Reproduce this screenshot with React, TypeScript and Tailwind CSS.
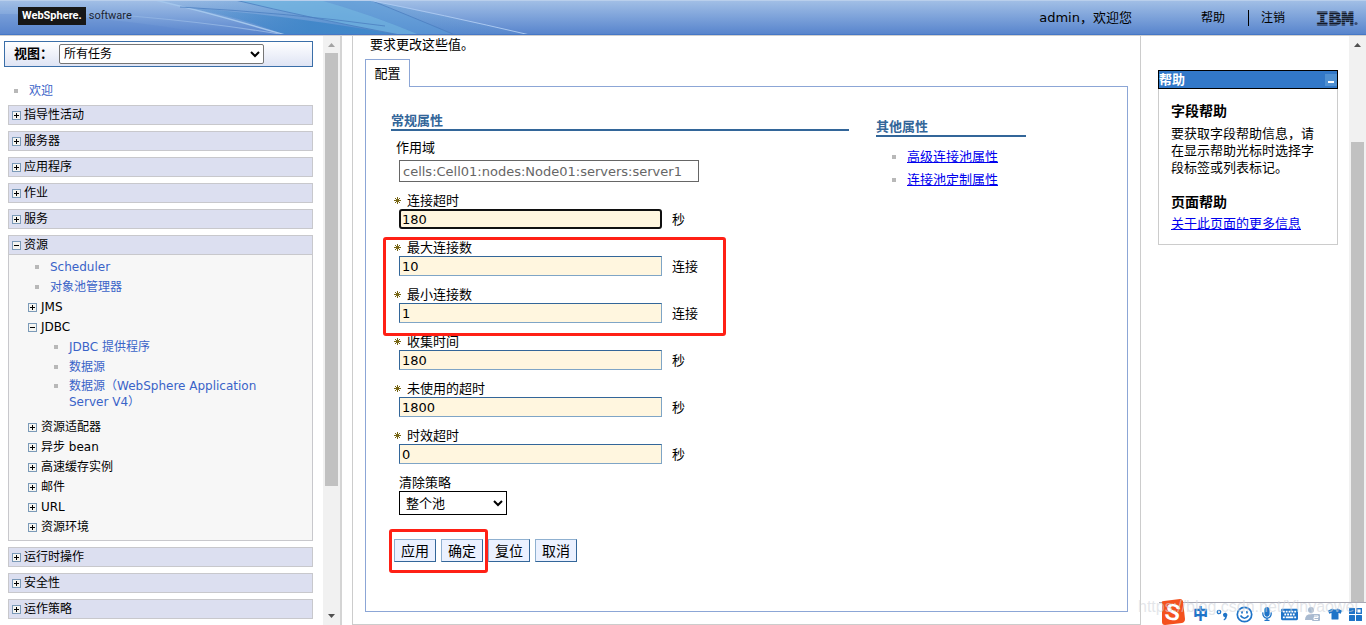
import { FaKeyboard, FaMicrophone, FaTshirt } from "react-icons/fa";

const requiredFields = [
  { id: "connTimeout", label: "连接超时", value: "180", unit: "秒", active: true },
  { id: "maxConn", label: "最大连接数", value: "10", unit: "连接" },
  { id: "minConn", label: "最小连接数", value: "1", unit: "连接" },
  { id: "reapTime", label: "收集时间", value: "180", unit: "秒" },
  { id: "unusedTimeout", label: "未使用的超时", value: "1800", unit: "秒" },
  { id: "agedTimeout", label: "时效超时", value: "0", unit: "秒" },
];

const ToggleIcon = ({ open = false }: { open?: boolean }) => (
  <svg width="9" height="9" viewBox="0 0 9 9" className="shrink-0" shapeRendering="crispEdges">
    <rect x="0.5" y="0.5" width="8" height="8" fill="#f4f4f0" stroke="#7b9ab8" />
    <path d="M2 4.5H7" stroke="#000" />
    {!open && <path d="M4.5 2V7" stroke="#000" />}
  </svg>
);

const Bullet = () => <span className="size-1 shrink-0 bg-[#b8b8b8]" />;

const Required = () => (
  <svg width="7" height="7" viewBox="0 0 7 7" className="shrink-0">
    <path d="M3.5 0V7M0 3.5H7M1 1L6 6M6 1L1 6" stroke="#766514" strokeWidth="1" />
  </svg>
);

const Section = ({ title, open = false }: { title: string; open?: boolean }) => (
  <button
    type="button"
    className="flex h-5 w-full items-center gap-[3px] border border-[#c8c8cc] bg-[#dcdff0] pl-[3px] text-left"
  >
    <ToggleIcon open={open} />
    {title}
  </button>
);

const Node = ({ title, open = false }: { title: string; open?: boolean }) => (
  <li>
    <button type="button" className="flex h-5 items-center gap-1 pl-[19px]">
      <ToggleIcon open={open} />
      {title}
    </button>
  </li>
);

const Leaf = ({ title, deep = false }: { title: string; deep?: boolean }) => (
  <li className={deep ? "flex h-5 items-center gap-[11px] pl-[45px]" : "flex h-5 items-center gap-[11px] pl-[26px]"}>
    <Bullet />
    <a href="#" className="text-[#3a63c8]">{title}</a>
  </li>
);

const Scrollbar = ({ side }: { side: "left" | "right" }) => (
  <div className="flex w-[17px] shrink-0 flex-col items-center bg-[#f1f1f1]">
    <svg width="17" height="17" viewBox="0 0 17 17" className="shrink-0">
      <path d="M5 11L8.5 7L12 11Z" fill={side === "left" ? "#a3a3a3" : "#505050"} />
    </svg>
    <div className="flex w-full flex-1 flex-col items-center">
      {side === "right" && <div className="h-[16%]" />}
      <div className={side === "left" ? "h-[78%] w-[13px] bg-[#c1c1c1]" : "w-[13px] flex-1 bg-[#c1c1c1]"} />
    </div>
    <svg width="17" height="17" viewBox="0 0 17 17" className="shrink-0">
      <path d="M5 6L8.5 10L12 6Z" fill="#505050" />
    </svg>
  </div>
);

const Header = () => (
  <header className="relative flex h-9 shrink-0 items-center overflow-hidden border-b border-[#cfcfcf] bg-linear-to-b from-[#a3c0e6] to-[#5683cc] px-2">
    <svg className="absolute top-0 left-0" width="540" height="35" viewBox="0 0 540 35">
      <defs>
        <linearGradient id="fade" x1="0" x2="1">
          <stop offset="0" stopColor="#3f86c8" stopOpacity="0.1" />
          <stop offset="0.6" stopColor="#3f86c8" stopOpacity="0.9" />
          <stop offset="1" stopColor="#4088cb" stopOpacity="0.9" />
        </linearGradient>
        <linearGradient id="sweep" x1="0" x2="1">
          <stop offset="0" stopColor="#4f93cf" stopOpacity="0.1" />
          <stop offset="0.5" stopColor="#4f93cf" stopOpacity="0.5" />
          <stop offset="1" stopColor="#4f93cf" stopOpacity="0.1" />
        </linearGradient>
      </defs>
      <path d="M155 0H368L530 35H285Z" fill="url(#sweep)" />
      <path d="M180 7Q280 14 400 35H285Q240 16 180 7Z" fill="url(#fade)" />
      <path d="M235 0H320Q370 14 420 35H400Q310 18 235 0Z" fill="#6fb4e0" opacity="0.7" />
      <path d="M320 0H368Q410 16 455 35H420Q370 14 320 0Z" fill="#5b9bd8" opacity="0.5" />
      <path d="M0 14Q100 14 215 35H0Z" fill="#5b84cc" opacity="0.3" />
      <path d="M155 0Q215 14 285 35" fill="none" stroke="#a4c6ec" strokeWidth="1.4" />
      <path d="M0 9Q150 13 280 34" fill="none" stroke="#8fb2e2" strokeWidth="1.2" />
      <path d="M235 0Q310 18 400 35M370 0Q410 16 455 35M180 7Q290 13 385 26" fill="none" stroke="#4b7fc0" strokeWidth="0.8" />
      <path d="M368 0Q440 14 530 35" fill="none" stroke="#a9c8f0" />
    </svg>
    <div className="absolute inset-x-0 top-0 h-px bg-[#b9cfec]" />
    <div className="absolute inset-x-0 bottom-0 h-px bg-[#4577c6]" />
    <div className="relative mb-1 ml-[10px] flex items-center gap-[3px] font-[Roboto,'Liberation_Sans',sans-serif] text-[11px] leading-[18px]">
      <span className="bg-[#171717] px-1 font-bold text-white">WebSphere.</span>
      <span className="text-[#1c2533]">software</span>
    </div>
    <div className="relative ml-auto flex items-center text-xs leading-4">
      <span className="mr-[69px] text-[13px]">admin，欢迎您</span>
      <a href="#">帮助</a>
      <span className="mr-3 ml-[23px] h-4 w-px bg-black" />
      <a href="#">注销</a>
      <svg className="ml-[30px]" width="43" height="26" viewBox="0 0 43 26" role="img" aria-label="IBM">
        <defs>
          <pattern id="stripes" width="4" height="2" patternUnits="userSpaceOnUse">
            <rect width="4" height="1.4" fill="#141a28" />
          </pattern>
        </defs>
        <text x="1" y="20" fontFamily="Liberation Mono" fontWeight="700" fontSize="21" fill="url(#stripes)" stroke="url(#stripes)">IBM</text>
        <circle cx="41" cy="18.5" r="1.6" fill="#3a4d73" />
      </svg>
    </div>
  </header>
);

const Sidebar = () => (
  <aside className="flex w-[342px] shrink-0 overflow-hidden border-r-2 border-[#d4d4d4]">
    <nav className="flex-1 pt-[5px] pr-[10px] pl-1 text-xs leading-4">
      <div className="flex h-[26px] items-center border border-[#3a6ea8] bg-linear-to-b from-white to-[#dfe4f4] pl-[9px]">
        <label htmlFor="view" className="w-[45px] text-[13px] font-bold">视图：</label>
        <select id="view" className="h-5 w-[205px] rounded-[2px] border border-[#767676] bg-white">
          <option>所有任务</option>
        </select>
      </div>
      <div className="mt-[14px] flex h-5 items-center gap-[11px] pl-[10px]">
        <Bullet />
        <a href="#" className="text-[#3a63c8]">欢迎</a>
      </div>
      <div className="mt-1 ml-1 flex flex-col gap-[6px]">
        <Section title="指导性活动" />
        <Section title="服务器" />
        <Section title="应用程序" />
        <Section title="作业" />
        <Section title="服务" />
        <div>
          <Section title="资源" open />
          <ul className="border border-t-0 border-[#c8c8cc] bg-[#f7f7f7] pt-[2px] pb-[3px]">
            <Leaf title="Scheduler" />
            <Leaf title="对象池管理器" />
            <Node title="JMS" />
            <Node title="JDBC" open />
            <Leaf title="JDBC 提供程序" deep />
            <Leaf title="数据源" deep />
            <li className="flex gap-[11px] pt-px pb-[7px] pl-[45px]">
              <span className="flex h-4 items-center"><Bullet /></span>
              <a href="#" className="w-[200px] text-[#3a63c8]">数据源（WebSphere Application Server V4）</a>
            </li>
            <Node title="资源适配器" />
            <Node title="异步 bean" />
            <Node title="高速缓存实例" />
            <Node title="邮件" />
            <Node title="URL" />
            <Node title="资源环境" />
          </ul>
        </div>
        <Section title="运行时操作" />
        <Section title="安全性" />
        <Section title="运作策略" />
      </div>
    </nav>
    <Scrollbar side="left" />
  </aside>
);

const GeneralForm = () => (
  <form className="relative w-[458px]">
    <h2 className="h-[19px] border-b-2 border-[#336699] text-[13px] leading-[18px] font-bold text-[#336699]">常规属性</h2>
    <div className="mt-2 pl-[5px]">
      <label htmlFor="scope" className="block">作用域</label>
      <input
        id="scope"
        readOnly
        defaultValue="cells:Cell01:nodes:Node01:servers:server1"
        className="mt-1 ml-[3px] block h-[22px] w-[300px] border border-[#666] px-[3px] text-[#666]"
      />
    </div>
    <div className="mt-[10px] flex flex-col gap-[10px] pl-[3px]">
      {requiredFields.map((f) => (
        <div key={f.id}>
          <label htmlFor={f.id} className="flex items-center gap-[6px]">
            <Required />
            {f.label}
          </label>
          <div className="flex items-center gap-[10px] pl-[5px]">
            <input
              id={f.id}
              defaultValue={f.value}
              className={
                f.active
                  ? "h-5 w-[263px] rounded-[3px] border-2 border-[#101010] bg-[#fff6df] px-px"
                  : "h-5 w-[263px] border border-[#7fa5c6] border-t-[#336699] border-l-[#336699] bg-[#fff6df] px-[2px]"
              }
            />
            <span>{f.unit}</span>
          </div>
        </div>
      ))}
    </div>
    <div className="mt-[10px] pl-2">
      <label htmlFor="purge" className="block">清除策略</label>
      <select id="purge" className="block h-6 w-[108px] border border-black bg-white px-[2px]">
        <option>整个池</option>
      </select>
    </div>
    <div className="mt-6 flex gap-[5px] pl-[3px] text-sm">
      {["应用", "确定", "复位", "取消"].map((name) => (
        <button
          key={name}
          type="button"
          className="h-[23px] w-[42px] border border-[#336699] border-t-[#8fb0d0] border-l-[#8fb0d0] bg-[#ebf1ff] leading-5"
        >
          {name}
        </button>
      ))}
    </div>
    {/* Highlight marks over the form */}
    <div className="pointer-events-none absolute top-[125px] -left-2 h-[99px] w-[343px] rounded-[3px] border-3 border-[#ff2015]" />
    <div className="pointer-events-none absolute top-[417px] -left-[2px] h-11 w-[99px] rounded-[3px] border-3 border-[#ff2015]" />
  </form>
);

const Content = () => (
  <main className="ml-[10px] flex flex-1 flex-col border border-t-0 border-[#cccccc] px-3 text-[13px] leading-[17px]">
    <p className="pl-[5px]">要求更改这些值。</p>
    <div className="relative mt-[6px] -mb-px flex h-7 w-[45px] items-center justify-center border border-b-0 border-[#8ca6d6] bg-white">
      配置
    </div>
    <div className="mb-3 flex flex-1 gap-[27px] border border-[#8ca6d6] pt-[25px] pl-[25px]">
      <GeneralForm />
      <section className="pt-[6px]">
        <h2 className="h-[19px] w-[150px] border-b-2 border-[#336699] text-[13px] leading-[18px] font-bold text-[#336699]">其他属性</h2>
        <ul className="mt-[11px] flex flex-col gap-[6px] pl-4">
          <li className="flex items-center gap-[11px]">
            <Bullet />
            <a href="#" className="text-[#0000ee] underline">高级连接池属性</a>
          </li>
          <li className="flex items-center gap-[11px]">
            <Bullet />
            <a href="#" className="text-[#0000ee] underline">连接池定制属性</a>
          </li>
        </ul>
      </section>
    </div>
  </main>
);

const HelpPortlet = () => (
  <aside className="flex w-[225px] shrink-0">
    <div className="flex-1 pt-[34px] pr-[11px] pl-[17px] text-[13px] leading-[17px]">
      <div className="flex h-[19px] items-center justify-between border border-black bg-[#3278c8] font-bold text-white">
        <h2>帮助</h2>
        <button type="button" aria-label="最小化" className="flex h-3 w-3 items-end justify-center bg-[#4f90d2] pb-[3px]">
          <span className="h-[2px] w-[6px] bg-white" />
        </button>
      </div>
      <div className="border border-t-0 border-[#cccccc] px-3 pt-3 pb-3">
        <h3 className="text-sm leading-5 font-bold">字段帮助</h3>
        <p className="mt-1">要获取字段帮助信息，请在显示帮助光标时选择字段标签或列表标记。</p>
        <h3 className="mt-4 text-sm leading-5 font-bold">页面帮助</h3>
        <a href="#" className="mt-[3px] block text-[#0000ee] underline">关于此页面的更多信息</a>
      </div>
    </div>
    <Scrollbar side="right" />
  </aside>
);

const InputBar = () => (
  <div className="absolute right-0 bottom-0 flex h-[23px] items-center gap-[7px] border-t border-[#a9a9b4] bg-white pr-1 text-[#1f74c8]">
    <svg width="27" height="27" viewBox="0 0 27 27" className="-mt-[5px]">
      <path d="M3 5Q2 3 5 3L21 1Q23 1 24 3L26 21Q26 24 23 25L6 27Q3 27 3 24Z" fill="#f4511e" />
      <text x="14" y="22" textAnchor="middle" fontFamily="Liberation Sans" fontWeight="700" fontSize="23" fill="#fff" transform="rotate(12 13.5 14)">S</text>
    </svg>
    <span className="text-[15px] leading-5 font-black">中</span>
    <svg width="14" height="16" viewBox="0 0 14 16">
      <circle cx="4" cy="6" r="1.7" fill="none" stroke="currentColor" strokeWidth="1.3" />
      <path d="M8 9a2.2 2.2 0 1 1 4.2 0.8Q12 13 9 14.5L8.5 13.5Q10 12.5 10 11.2A2.2 2.2 0 0 1 8 9Z" fill="currentColor" />
    </svg>
    <svg width="17" height="17" viewBox="0 0 17 17" fill="none" stroke="currentColor" strokeWidth="1.7">
      <circle cx="8.5" cy="8.5" r="7.2" />
      <path d="M4.5 9.5Q8.5 15 12.5 9.5" />
      <path d="M6 5V7.5M11 5V7.5" />
    </svg>
    <FaMicrophone size={14} />
    <FaKeyboard size={17} />
    <svg width="16" height="16" viewBox="0 0 16 16">
      <circle cx="6" cy="4" r="3" fill="#a9bad0" />
      <path d="M0 14Q0 8 6 8Q9 8 9 9V14Z" fill="#a9bad0" />
      <rect x="7" y="8" width="8" height="7" rx="1" fill="#a9bad0" />
      <path d="M9 10H13V11.5H9V13.5H13" fill="none" stroke="#fff" />
    </svg>
    <FaTshirt size={14} />
    <svg width="13" height="13" viewBox="0 0 13 13" fill="currentColor">
      <rect width="6" height="6" rx="0.5" />
      <rect x="7.7" y="0.7" width="4.6" height="4.6" fill="none" stroke="currentColor" strokeWidth="1.4" />
      <rect y="7" width="6" height="6" rx="0.5" />
      <rect x="7" y="7" width="6" height="6" rx="0.5" />
    </svg>
  </div>
);

export default function App() {
  return (
    <div className="relative flex h-screen flex-col overflow-hidden bg-white font-['DejaVu_Sans','Noto_Sans_CJK_SC',sans-serif] text-black">
      <Header />
      <div className="flex min-h-0 flex-1">
        <Sidebar />
        <Content />
        <HelpPortlet />
      </div>
      <InputBar />
      <span className="pointer-events-none absolute right-2 bottom-2 font-['Liberation_Sans',sans-serif] text-base leading-5 text-gray-300/60">
        https://blog.csdn.net/Yinyaowei
      </span>
    </div>
  );
}
